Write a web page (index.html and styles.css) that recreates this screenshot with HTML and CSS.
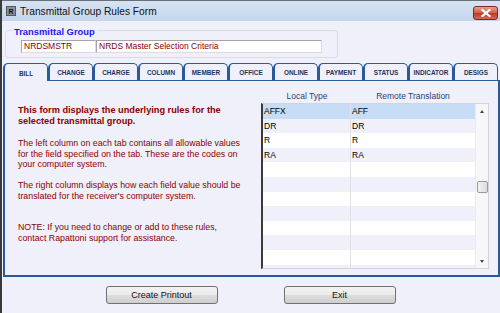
FILE: index.html
```
<!DOCTYPE html>
<html>
<head>
<meta charset="utf-8">
<link rel="stylesheet" href="styles.css">
</head>
<body>
<div class="window">
  <div class="titlebar">
    <div class="app-icon"><span>R</span></div>
    <div class="title">Transmittal Group Rules Form</div>
    <div class="close-btn">
      <svg width="10" height="8" viewBox="0 0 10 8"><path d="M1.5 1 L8.5 7 M8.5 1 L1.5 7" stroke="#fff" stroke-width="2.2" stroke-linecap="square"/></svg>
    </div>
  </div>

  <div class="group">
    <div class="group-label">Transmittal Group</div>
    <div class="fields">
      <div class="field code">NRDSMSTR</div>
      <div class="field desc">NRDS Master Selection Criteria</div>
    </div>
  </div>

  <div class="tabs">
    <div class="tab active">BILL</div>
    <div class="tab">CHANGE</div>
    <div class="tab">CHARGE</div>
    <div class="tab">COLUMN</div>
    <div class="tab">MEMBER</div>
    <div class="tab">OFFICE</div>
    <div class="tab">ONLINE</div>
    <div class="tab">PAYMENT</div>
    <div class="tab">STATUS</div>
    <div class="tab">INDICATOR</div>
    <div class="tab">DESIGS</div>
  </div>

  <div class="panel">
    <div class="info">
      <p class="lead">This form displays the underlying rules for the selected transmittal group.</p>
      <p class="p2">The left column on each tab contains all allowable values for the field specified on the tab. These are the codes on your computer system.</p>
      <p class="p3">The right column displays how each field value should be translated for the receiver's computer system.</p>
      <p class="note">NOTE: If you need to change or add to these rules, contact Rapattoni support for assistance.</p>
    </div>
    <div class="gridwrap">
      <div class="grid-head">
        <div class="hcol c1">Local Type</div>
        <div class="hcol c2">Remote Translation</div>
      </div>
      <div class="grid">
        <div class="rows">
          <div class="row sel"><div class="cell c1">AFFX</div><div class="cell c2">AFF</div></div>
          <div class="row alt"><div class="cell c1">DR</div><div class="cell c2">DR</div></div>
          <div class="row"><div class="cell c1">R</div><div class="cell c2">R</div></div>
          <div class="row alt"><div class="cell c1">RA</div><div class="cell c2">RA</div></div>
          <div class="row"><div class="cell c1"></div><div class="cell c2"></div></div>
          <div class="row alt"><div class="cell c1"></div><div class="cell c2"></div></div>
          <div class="row"><div class="cell c1"></div><div class="cell c2"></div></div>
          <div class="row alt"><div class="cell c1"></div><div class="cell c2"></div></div>
          <div class="row"><div class="cell c1"></div><div class="cell c2"></div></div>
          <div class="row alt"><div class="cell c1"></div><div class="cell c2"></div></div>
          <div class="row"><div class="cell c1"></div><div class="cell c2"></div></div>
          <div class="row alt"><div class="cell c1"></div><div class="cell c2"></div></div>
        </div>
        <div class="scrollbar">
          <div class="arrow up"></div>
          <div class="track"><div class="thumb"></div></div>
          <div class="arrow down"></div>
        </div>
      </div>
    </div>
  </div>

  <div class="buttons">
    <div class="btn">Create Printout</div>
    <div class="btn">Exit</div>
  </div>
</div>
</body>
</html>
```

FILE: styles.css
```
* { box-sizing: border-box; }
html, body { margin: 0; padding: 0; }
body {
  width: 500px;
  height: 313px;
  overflow: hidden;
  font-family: "Liberation Sans", Arial, sans-serif;
}
.window {
  width: 500px;
  height: 313px;
  background: #f0f0fa;
  border-left: 2px solid #3a3a3a;
  display: flex;
  flex-direction: column;
  overflow: hidden;
}
.titlebar {
  height: 21px;
  flex: none;
  background: linear-gradient(#d6e3f2, #c4d6ed);
  border-top: 1px solid #6a6f78;
  display: flex;
  align-items: center;
  padding-left: 4px;
  padding-right: 2px;
}
.app-icon {
  width: 10px;
  height: 10px;
  background: #8a8f98;
  border: 1px solid #55595f;
  display: flex;
  align-items: center;
  justify-content: center;
}
.app-icon span {
  font-size: 7px;
  font-weight: bold;
  color: #111;
  line-height: 1;
}
.title {
  margin-left: 4px;
  font-size: 10.2px;
  color: #111;
  flex: 1;
}
.close-btn {
  width: 25px;
  height: 14px;
  margin-top: 4px;
  border: 1px solid #7a2a20;
  border-radius: 3px;
  background: linear-gradient(#e8a090, #d35a43 50%, #b83a22 51%, #d86a50);
  display: flex;
  align-items: center;
  justify-content: center;
}

.group {
  position: relative;
  margin: 9px 0 0 3px;
  width: 333px;
  height: 28px;
  border: 1px solid #d8dde6;
  border-radius: 3px;
  flex: none;
}
.group-label {
  position: absolute;
  top: -5px;
  left: 6px;
  padding: 0 2px;
  background: #f0f0fa;
  color: #1a1ae6;
  font-weight: bold;
  font-size: 9.4px;
  line-height: 12px;
}
.fields {
  display: flex;
  margin: 9px 0 0 15px;
}
.field {
  height: 13px;
  background: #fff;
  border: 1px solid #a5a5a5;
  border-right-color: #dcdcdc;
  border-bottom-color: #dcdcdc;
  color: #8b0000;
  font-size: 8.5px;
  line-height: 11px;
  padding-left: 2px;
}
.field.code { width: 75px; }
.field.desc { width: 226px; }

.tabs {
  display: flex;
  margin: 5px 0 0 1px;
  height: 17px;
  flex: none;
  position: relative;
  z-index: 1;
}
.tab {
  width: 45px;
  height: 17px;
  border: 1px solid #2b5a9a;
  border-left-width: 2px;
  border-bottom: none;
  border-radius: 5px 5px 0 0;
  background: #f0f0fa;
  color: #1a3563;
  font-size: 6.4px;
  font-weight: bold;
  display: flex;
  align-items: center;
  justify-content: center;
  padding-top: 1px;
  white-space: nowrap;
  overflow: hidden;
}
.tab.active {
  height: 18px;
  margin-bottom: -1px;
}

.panel {
  margin-left: 1px;
  height: 197px;
  flex: none;
  border: 1px solid #2b5a9a;
  border-left-width: 2px;
  border-right-width: 2px;
  border-bottom-width: 2px;
  display: flex;
}
.info {
  width: 242px;
  padding: 24px 4px 0 13px;
  color: #8b0000;
  font-size: 8.8px;
  line-height: 10.5px;
}
.info p { margin: 0; }
.info p.lead {
  font-weight: bold;
  font-size: 9.2px;
}
.info p.p2 { margin-top: 12px; }
.info p.p3 { margin-top: 10.5px; }
.info p.note { margin-top: 21px; }
.gridwrap {
  margin-left: 14px;
  width: 228px;
  display: flex;
  flex-direction: column;
}
.grid-head {
  display: flex;
  height: 22px;
  align-items: center;
  padding-top: 8px;
  padding-left: 2px;
}
.hcol {
  color: #1f3f80;
  font-size: 8.5px;
  text-align: center;
}
.hcol.c1 { width: 88px; }
.hcol.c2 { width: 124px; }
.grid {
  height: 166px;
  display: flex;
  border: 1px solid #d4d4d8;
  border-left: 2px solid #3a3a3a;
  background: #fff;
  overflow: hidden;
}
.rows { width: 212px; }
.row {
  display: flex;
  height: 14.6px;
  background: #fff;
}
.row.alt { background: #f0f0fa; }
.row.sel { background: #c7ddf5; }
.cell {
  font-size: 8.5px;
  color: #000;
  line-height: 14.6px;
  padding-left: 1px;
  white-space: nowrap;
}
.cell.c1 { width: 88px; border-right: 1px solid #dfdfe4; }
.cell.c2 { width: 124px; }
.scrollbar {
  width: 14px;
  display: flex;
  flex-direction: column;
  align-items: center;
  background: #f7f7f9;
  border-left: 1px solid #ececf0;
}
.arrow {
  width: 0;
  height: 0;
  border-left: 2.5px solid transparent;
  border-right: 2.5px solid transparent;
  flex: none;
}
.arrow.up {
  margin-top: 6px;
  border-bottom: 3px solid #444;
}
.arrow.down {
  margin-bottom: 5px;
  border-top: 3px solid #444;
}
.track {
  flex: 1;
  width: 100%;
  position: relative;
}
.thumb {
  position: absolute;
  left: 1px;
  top: 68px;
  width: 11px;
  height: 12px;
  border: 1px solid #9a9a9a;
  border-radius: 2px;
  background: linear-gradient(90deg, #f2f2f2, #dcdcdc);
}

.buttons {
  display: flex;
  justify-content: center;
  gap: 66px;
  margin-top: 9px;
  padding-right: 1px;
}
.btn {
  width: 112px;
  height: 18px;
  border: 1px solid #707070;
  border-radius: 3px;
  background: linear-gradient(#f2f2f2, #ebebeb 50%, #dddddd 51%, #cfcfcf);
  color: #111;
  font-size: 9px;
  display: flex;
  align-items: center;
  justify-content: center;
}
```
